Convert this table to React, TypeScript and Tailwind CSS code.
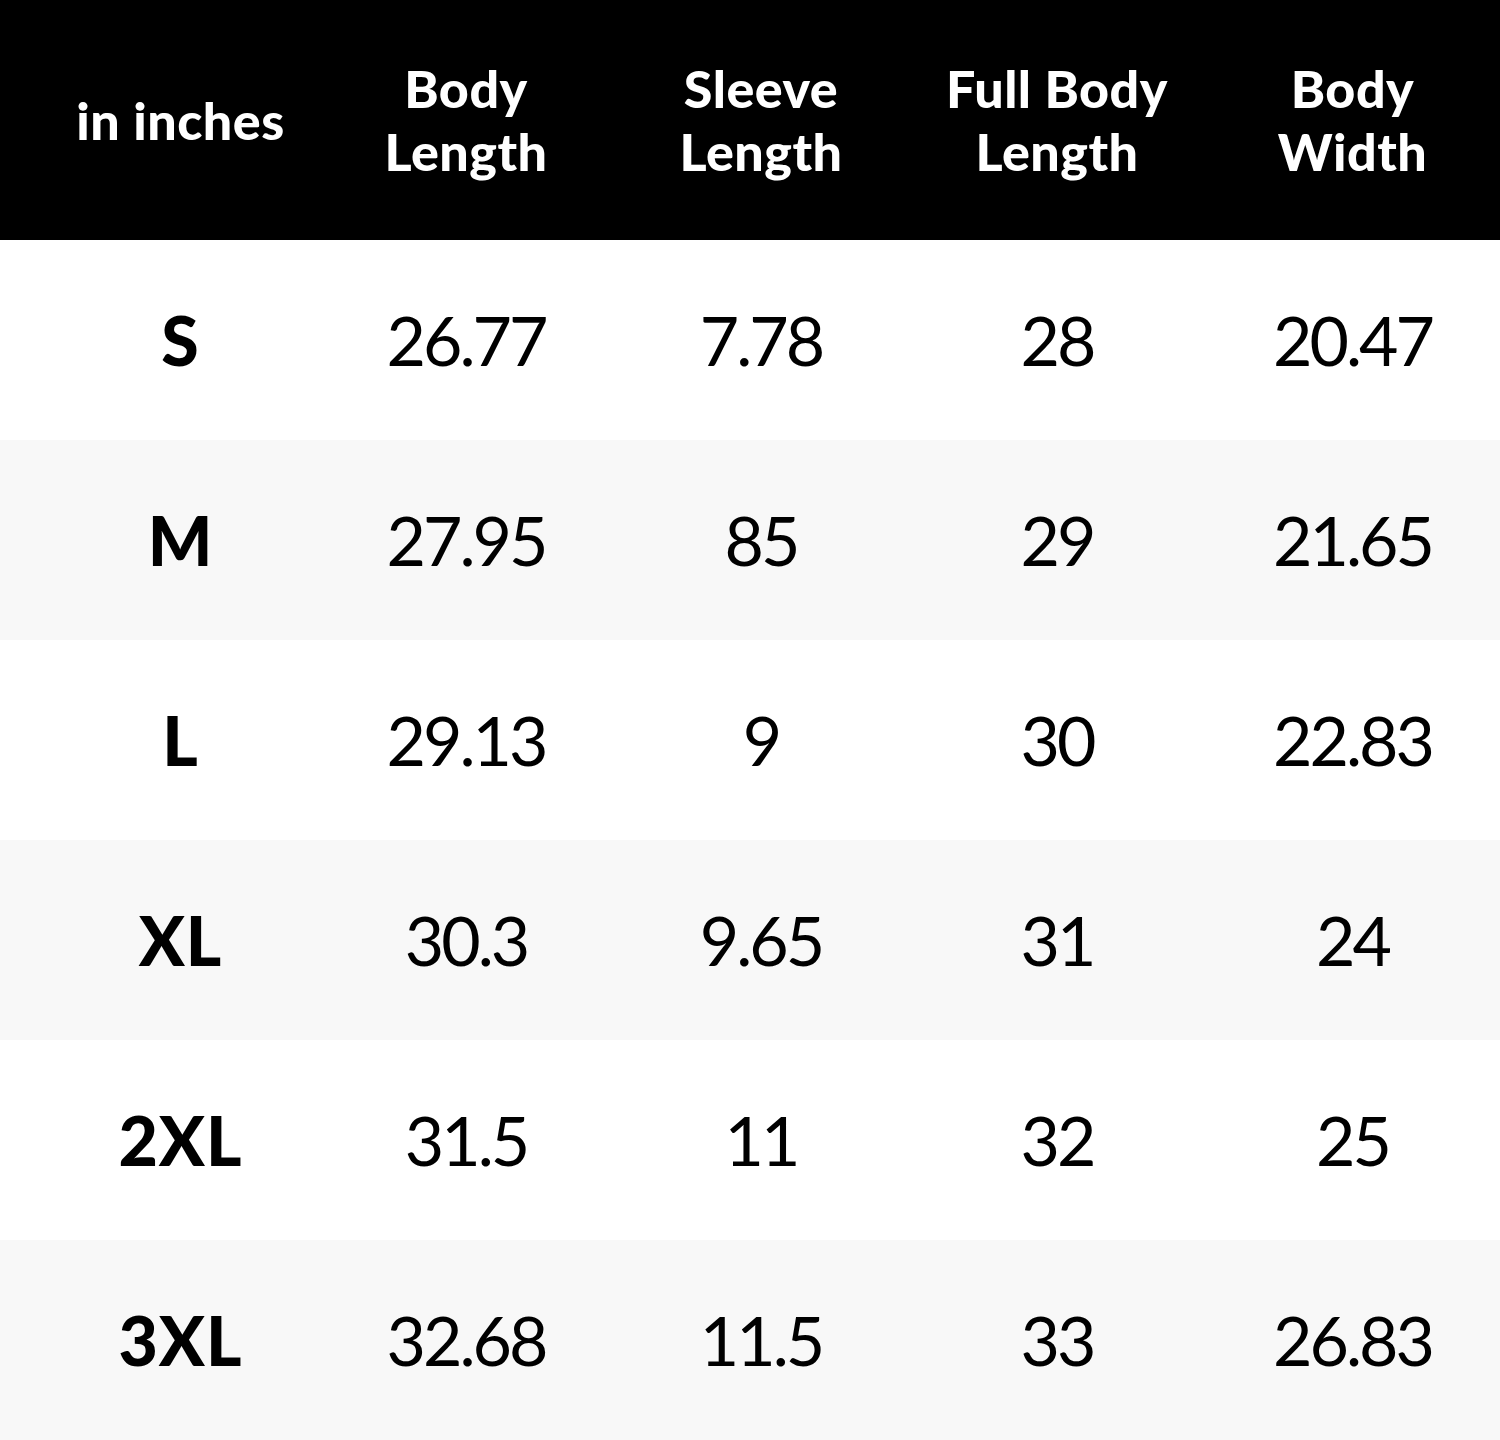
import React from "react";

const rows = [
  ["S", "26.77", "7.78", "28", "20.47"],
  ["M", "27.95", "85", "29", "21.65"],
  ["L", "29.13", "9", "30", "22.83"],
  ["XL", "30.3", "9.65", "31", "24"],
  ["2XL", "31.5", "11", "32", "25"],
  ["3XL", "32.68", "11.5", "33", "26.83"],
];

const headers = [
  ["Body", "Length"],
  ["Sleeve", "Length"],
  ["Full Body", "Length"],
  ["Body", "Width"],
];

export default function App() {
  return (
    <div
      className="w-[1500px] h-[1440px] bg-white text-black"
      style={{ fontFamily: "Lato, 'Noto Sans', sans-serif" }}
    >
      <div className="grid grid-cols-[319px_294px_296px_296px_295px] h-[240px] bg-black text-white font-black">
        <div className="flex items-center justify-center pl-[42px] text-[52px] leading-none tracking-[0.5px] whitespace-nowrap">
          in inches
        </div>
        {headers.map((h, i) => (
          <div
            key={i}
            className="flex flex-col items-center justify-center text-[52px] leading-[63px] tracking-[0.5px] whitespace-nowrap"
          >
            <span>{h[0]}</span>
            <span>{h[1]}</span>
          </div>
        ))}
      </div>
      {rows.map((r, i) => (
        <div
          key={i}
          className={`grid grid-cols-[319px_294px_296px_296px_295px] h-[200px] ${
            i % 2 === 1 ? "bg-[#f8f8f8]" : "bg-white"
          }`}
        >
          <div className="flex items-center justify-center pl-[42px] text-[68px] font-black leading-none tracking-[1px]">
            {r[0]}
          </div>
          {r.slice(1).map((v, j) => (
            <div
              key={j}
              className="flex items-center justify-center text-[68px] leading-none tracking-[-3px]"
            >
              {v}
            </div>
          ))}
        </div>
      ))}
    </div>
  );
}
